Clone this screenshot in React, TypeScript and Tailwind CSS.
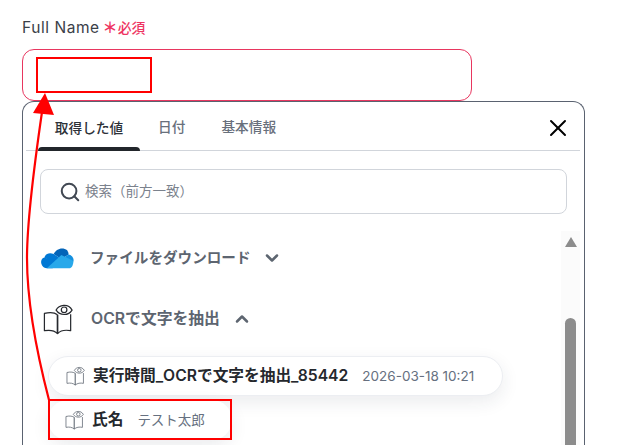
import React from "react";
import { Search, X, ChevronDown, ChevronUp } from "lucide-react";

const BookEye = ({ className }: { className?: string }) => (
  <svg viewBox="0 0 32 34" fill="none" stroke="currentColor" className={className}>
    <path d="M15.5 12.5C13 10.500 8 9.500 1.500 11V29.500C7 28.500 12 29 15.500 32.500C19 29 24.500 28.500 29.500 29.500V12" strokeWidth="1.300" strokeLinejoin="round" />
    <path d="M15.500 12.500V32.500" strokeWidth="1.800" />
    <path d="M14 7.500C17 1.500 27 0 31 7.500C27 14 18 13.500 14 7.500Z" strokeWidth="1.300" fill="white" />
    <circle cx="22.500" cy="7.200" r="3" strokeWidth="1.300" />
  </svg>
);

const OneDrive = () => (
  <svg viewBox="0 0 34 22" className="w-[33px] h-[22px] shrink-0">
    <path d="M13 7C15 2 22 -1 27 3C28 4.500 28.500 6 28.500 7.500L21 12Z" fill="#0364b8" />
    <path d="M13 7C9 5 4.500 6.500 3.500 10.500L12 15L21 12Z" fill="#0078d4" />
    <path d="M21 12L28.500 7.500C31.500 8 34 11 33.500 14L26 18Z" fill="#1490df" />
    <path d="M3.500 10.500C0.500 11 -1 15 1 18.500C2 20.500 4 21.500 6 21.500H12L18 15L12 13Z" fill="#0078d4" />
    <path d="M6 21.500H29C31.500 21.500 33 19 33.500 14L21 8L6 21.500Z" fill="#28a8ea" />
  </svg>
);

export default function App() {
  return (
    <div
      className="relative w-[620px] h-[445px] overflow-hidden bg-white pl-[22px] pt-[19px]"
      style={{ fontFamily: '"Inter", "Noto Sans CJK JP", sans-serif' }}
    >
      <div className="flex items-center h-[18px] text-[15.500px] leading-[18px] text-[#3b4048] tracking-[0.55px]">
        Full Name
        <span className="ml-[3px] text-[#ee3562] text-[15px] font-bold leading-[18px] tracking-normal">＊</span>
        <span className="ml-[0px] text-[#ee3562] text-[13.800px] font-medium leading-[18px] tracking-normal">必須</span>
      </div>
      <div className="mt-[12px] w-[450px] h-[52px] rounded-[12px] border border-[#e8365f] bg-white" />
      <div className="w-[563px] h-[400px] rounded-t-[12px] border border-[#5a6270] border-b-0 bg-white pl-[3px] pr-[4px]">
        <div className="flex justify-between h-[49px] border-b border-[#d1d5db]">
          <div className="flex text-[13.700px] font-medium pl-[12px]">
            <div className="w-[102px] h-[49px] flex flex-col text-[#2d3138]">
              <div className="flex-1 flex items-center justify-center pt-[7px]">取得した値</div>
              <div className="h-[4px] bg-[#22262b] rounded-t-[4px]" />
            </div>
            <div className="text-[#68707c] ml-[18px] h-[48px] pt-[3px] flex items-center">日付</div>
            <div className="text-[#68707c] ml-[36px] h-[48px] pt-[3px] flex items-center">基本情報</div>
          </div>
          <X className="w-[28px] h-[28px] text-black mr-[8px] mt-[12px]" strokeWidth={1.700} />
        </div>
        <div className="ml-[14px] mt-[18px] w-[527px] h-[45px] rounded-[8px] border border-[#d1d5db] flex items-center pl-[18px] gap-[4px]">
          <Search className="w-[22px] h-[22px] text-[#414853]" strokeWidth={2.200} />
          <span className="text-[13.500px] text-[#7b828d]">検索（前方一致）</span>
        </div>
        <div className="relative">
          <div className="pl-[15px] pt-[30px]">
            <div className="flex items-center h-[28px]">
              <OneDrive />
              <span className="ml-[16px] text-[14.600px] font-semibold text-[#5d6570] mt-[1px]">ファイルをダウンロード</span>
              <ChevronDown className="ml-[11px] w-[20px] h-[20px] text-[#5d6570]" strokeWidth={3} />
            </div>
            <div className="flex items-center h-[34px] mt-[30px]">
              <BookEye className="w-[30px] h-[34px] ml-[2px] text-[#26292e]" />
              <span className="ml-[18px] text-[15.800px] font-semibold text-[#5d6570]">OCRで文字を抽出</span>
              <ChevronUp className="ml-[12px] w-[20px] h-[20px] text-[#5d6570]" strokeWidth={3} />
            </div>
            <div className="mt-[20px] ml-[7px] w-[455px] h-[40px] rounded-full border border-[#eceef2] bg-white shadow-[0_6px_18px_rgba(30,40,70,0.09)] flex items-center pl-[17px]">
              <BookEye className="w-[19px] h-[20px] text-[#5d6570]" />
              <span className="ml-[8px] text-[15.700px] font-semibold text-[#25282d]">実行時間_OCRで文字を抽出_85442</span>
              <span className="ml-[14px] text-[13.500px] text-[#667080]">2026-03-18 10:21</span>
            </div>
            <div className="mt-[4px] ml-[7px] w-[184px] h-[40px] rounded-full bg-white shadow-[0_6px_18px_rgba(30,40,70,0.09)] flex items-center pl-[17px]">
              <BookEye className="w-[19px] h-[20px] text-[#5d6570]" />
              <span className="ml-[8px] text-[15.700px] font-semibold text-[#25282d]">氏名</span>
              <span className="ml-[14px] text-[13.500px] text-[#667080]">テスト太郎</span>
            </div>
          </div>
          <div className="absolute right-0 top-[17px] w-[19px] h-[240px] bg-[#fbfbfb]">
            <div className="mx-auto mt-[6px] w-0 h-0 border-x-[6.500px] border-x-transparent border-b-[10px] border-b-[#8c8c8c]" />
            <div className="mx-auto mt-[71px] w-[11px] h-[140px] rounded-t-[6px] bg-[#8c8c8c]" />
          </div>
        </div>
      </div>

      {/* red annotations */}
      <div className="absolute left-[36px] top-[57px] w-[116px] h-[36px] border-[2px] border-[#ff0000]" />
      <div className="absolute left-[48px] top-[399px] w-[184px] h-[41px] border-[2px] border-[#ff0000]" />
      <svg className="absolute left-0 top-0 w-[620px] h-[445px] pointer-events-none" viewBox="0 0 620 445" fill="none">
        <path d="M49 400C36 350 27 300 27 258C27 220 35 160 42 112" stroke="#ff0000" strokeWidth="2.200" />
        <path d="M45 93L33 113L54 115Z" fill="#ff0000" />
      </svg>
    </div>
  );
}
